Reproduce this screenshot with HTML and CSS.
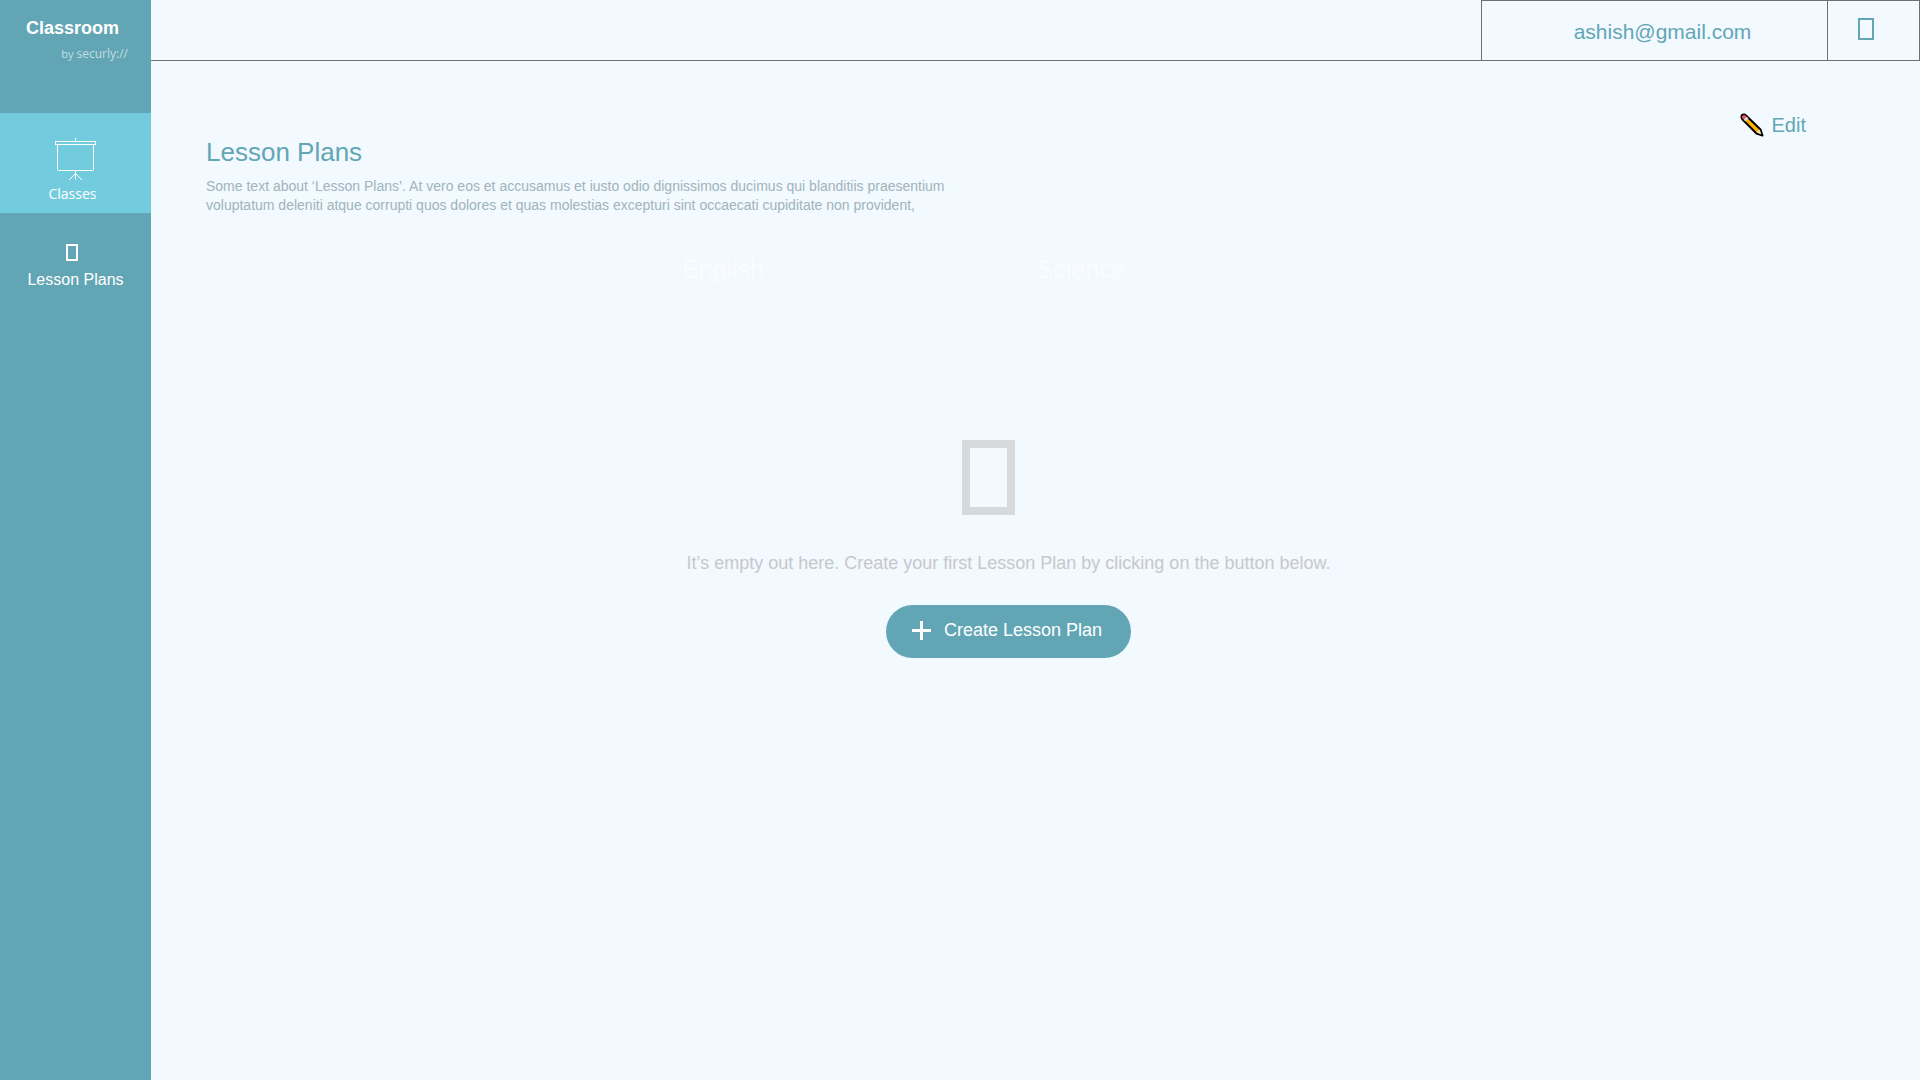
FILE: index.html
```html
<!DOCTYPE html>
<html lang="en">
<head>
    <meta charset="UTF-8">
    <title>Lesson Plans</title>
    <link rel="stylesheet" href="styles.css">
</head>
<body>
    <aside class="sidebar">
        <div class="brand">
            <div class="brand-name">Classroom</div>
            <div class="brand-by"><small>by</small> securly://</div>
        </div>
        <nav>
            <a class="nav-item active" href="#">
                <svg width="42" height="43" viewBox="0 0 42 43" fill="none" stroke="#fff">
                    <path d="M20.5 0v3"/>
                    <rect x="0.5" y="3.5" width="40" height="3"/>
                    <path d="M2.5 6.5v25q0 1 1 1h34q1 0 1-1v-25"/>
                    <path d="M20.5 32.5v9M20.5 35.500l-6.500 6.500M20.500 35.500l6.500 6.500"/>
                </svg>
                <span class="nav-classes">Classes</span>
            </a>
            <a class="nav-item" href="#">
                <i class="box box-small"></i>
                <span>Lesson Plans</span>
            </a>
        </nav>
    </aside>

    <div class="page">
        <header class="topbar">
            <div class="user">ashish@gmail.com</div>
            <button class="logout" aria-label="Log out"><i class="box box-medium"></i></button>
        </header>

        <main class="content">
            <button class="edit">
                <svg width="24" height="24" viewBox="0 0 24 24">
                    <path d="M1.500 4.500Q1 1 4.500 1.500L6 2.500L20.500 16.500L22.500 22.500L16.500 20.500L2.500 6.500Z" fill="#ffb500" stroke="#000" stroke-width="2" stroke-linejoin="round"/>
                    <path d="M2 4.500Q2 2 4.500 2L6.800 3.800L3.800 6.800Z" fill="#ef5168"/>
                    <path d="M3.800 6.800L6.800 3.800L8.500 5.500L5.500 8.500Z" fill="#d9dde2"/>
                    <path d="M19.500 16.500L21.500 21.500L16.500 19.500Z" fill="#f3dcc4"/>
                </svg>
                <span>Edit</span>
            </button>

            <h1>Lesson Plans</h1>
            <p class="intro">Some text about ‘Lesson Plans’. At vero eos et accusamus et iusto odio dignissimos ducimus qui blanditiis praesentium voluptatum deleniti atque corrupti quos dolores et quas molestias excepturi sint occaecati cupiditate non provident,</p>

            <div class="subjects">
                <span>English</span>
                <span>Science</span>
            </div>

            <section class="empty">
                <i class="box box-large"></i>
                <p>It’s empty out here. Create your first Lesson Plan by clicking on the button below.</p>
                <button class="create">
                    <svg width="19" height="19" viewBox="0 0 19 19" stroke="#fff" stroke-width="3">
                        <path d="M9.500 0v19M0 9.500h19"/>
                    </svg>
                    <span>Create Lesson Plan</span>
                </button>
            </section>
        </main>
    </div>
</body>
</html>
```
FILE: styles.css
```css
* {
    box-sizing: border-box;
}
body {
    display: flex;
    min-height: 100vh;
    margin: 0;
    background-color: #f2f9ff;
    color: #62a6b5;
    font-family: "Liberation Sans", Arial, sans-serif;
}
button {
    padding: 0;
    border: none;
    background: none;
    color: inherit;
    font-family: inherit;
    cursor: pointer;
}
svg {
    display: block;
    flex: none;
}

/* sidebar */
.sidebar {
    flex: none;
    width: 151px;
    background-color: #62a6b5;
    color: #fff;
}
.brand {
    height: 113px;
    padding: 18px 23px 0 26px;
}
.brand-name {
    font-size: 18px;
    line-height: 20px;
    font-weight: bold;
}
.brand-by {
    margin-top: 6px;
    color: #c3dee4;
    font-family: "Open Sans", sans-serif;
    font-size: 12px;
    line-height: 20px;
    text-align: right;
}
.brand-by small {
    font-size: 11px;
}
.nav-item {
    display: flex;
    flex-direction: column;
    align-items: center;
    height: 100px;
    padding-top: 25px;
    color: #fff;
    font-size: 16px;
    line-height: 20px;
    text-decoration: none;
}
.nav-item.active {
    background-color: #73ccde;
}
.nav-classes {
    margin: 3px 6px 0 0;
    font-family: "Open Sans", sans-serif;
    font-size: 14px;
}
.nav-item .box {
    margin: 6px 8px 9px 0;
}

/* empty icon boxes */
.box {
    display: block;
    flex: none;
    border: 2px solid currentColor;
}
.box-small {
    width: 12px;
    height: 17px;
}
.box-medium {
    width: 16px;
    height: 22px;
}
.box-large {
    width: 53px;
    height: 75px;
    border-width: 8px;
    color: #d7dadc;
}

/* top bar */
.page {
    flex: 1;
}
.topbar {
    display: flex;
    justify-content: flex-end;
    height: 61px;
    border-bottom: 1px solid #707070;
}
.user {
    width: 346px;
    padding: 19px 0 0 16px;
    border: 1px solid #707070;
    border-width: 1px 0 0 1px;
    font-size: 21px;
    line-height: 24px;
    text-align: center;
}
.logout {
    display: flex;
    width: 93px;
    padding: 17px 0 0 30px;
    border: 1px solid #707070;
    border-bottom: none;
}

/* content */
.content {
    padding: 52px 109px 40px 55px;
}
.edit {
    display: flex;
    align-items: center;
    gap: 8px;
    margin: 0 5px 0 auto;
    font-size: 20px;
    line-height: 24px;
}
h1 {
    margin: 0;
    font-size: 26px;
    line-height: 30px;
    font-weight: normal;
}
.intro {
    max-width: 760px;
    margin: 10px 0 0;
    color: #a0b4bb;
    font-size: 14px;
    line-height: 19px;
}
.subjects {
    display: grid;
    grid-template-columns: 358px 358px;
    margin-top: 39px;
    padding-left: 338px;
    color: #fbfcfd;
    font-size: 25px;
    line-height: 30px;
    text-align: center;
}
.empty {
    display: flex;
    flex-direction: column;
    align-items: center;
    padding-top: 156px;
}
.empty .box {
    margin-right: 40px;
}
.empty p {
    margin: 37px 0 31px;
    color: #c7c8cc;
    font-size: 18px;
    line-height: 22px;
}
.create {
    display: flex;
    align-items: center;
    gap: 13px;
    height: 53px;
    padding: 0 29px 2px 26px;
    border-radius: 27px;
    background-color: #62a6b5;
    color: #fff;
    font-size: 18px;
    line-height: 22px;
}
.create span {
    padding-bottom: 2px;
}
```
